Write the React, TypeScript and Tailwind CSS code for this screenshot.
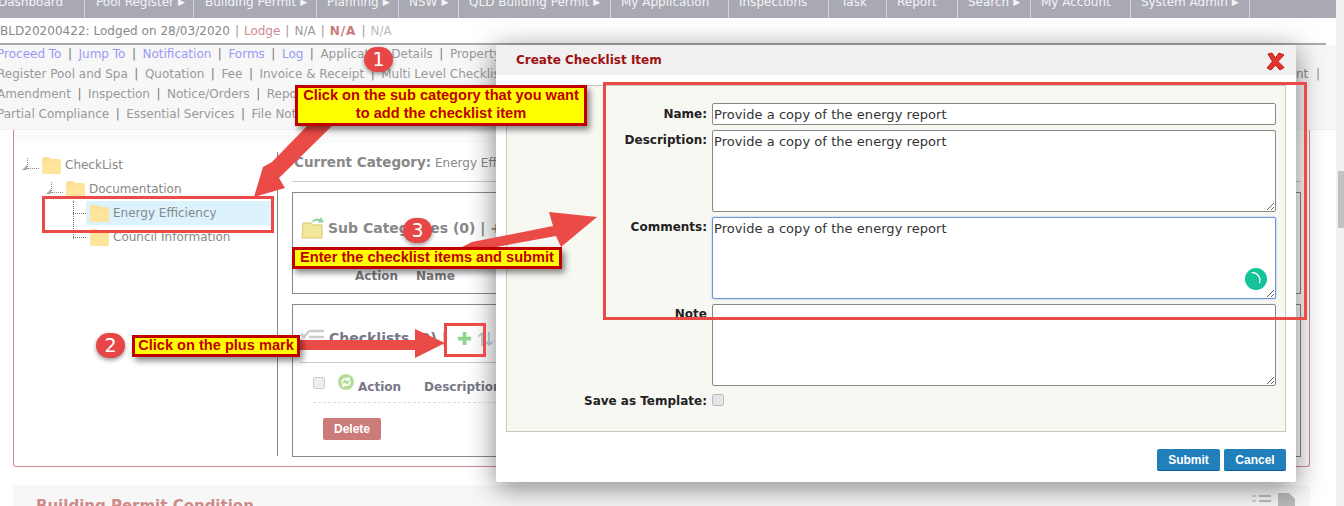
const navItems = [
  { label: "Dashboard", width: "w-[87px]", pad: "pl-0", arrow: false },
  { label: "Pool Register", width: "w-[109px]", pad: "pl-[11px]", arrow: true },
  { label: "Building Permit", width: "w-[123px]", pad: "pl-[11px]", arrow: true },
  { label: "Planning", width: "w-[82px]", pad: "pl-[10px]", arrow: true },
  { label: "NSW", width: "w-[60px]", pad: "pl-[10px]", arrow: true },
  { label: "QLD Building Permit", width: "w-[152px]", pad: "pl-[10px]", arrow: true },
  { label: "My Application", width: "w-[118px]", pad: "pl-[10px]", arrow: false },
  { label: "Inspections", width: "w-[100px]", pad: "pl-[10px]", arrow: false },
  { label: "Task", width: "w-[58px]", pad: "pl-[12px]", arrow: false },
  { label: "Report", width: "w-[71px]", pad: "pl-[10px]", arrow: false },
  { label: "Search", width: "w-[73px]", pad: "pl-[10px]", arrow: true },
  { label: "My Account", width: "w-[100px]", pad: "pl-[10px]", arrow: false },
  { label: "System Admin", width: "w-[119px]", pad: "pl-[10px]", arrow: true },
];

const linkRows = [
  ["Proceed To", "Jump To", "Notification", "Forms", "Log", "Application Details", "Property"],
  ["Register Pool and Spa", "Quotation", "Fee", "Invoice & Receipt", "Multi Level Checklist"],
  ["Amendment", "Inspection", "Notice/Orders", "Reports"],
  ["Partial Compliance", "Essential Services", "File Notes"],
];

const blueLinks = ["Proceed To", "Jump To", "Notification", "Forms", "Log"];

const Folder = ({ open = false }: { open?: boolean }) => (
  <svg width="21" height="18" viewBox="0 0 21 18" className="shrink-0">
    <path d="M1 3q0-2 2-2h5l2 2h8q2 0 2 2v11q0 2-2 2H3q-2 0-2-2z" fill="#ffdf9a" />
    <path d={open ? "M1 7h19v9q0 2-2 2H3q-2 0-2-2z" : "M1 6h19v10q0 2-2 2H3q-2 0-2-2z"} fill="#ffe49c" />
  </svg>
);

const Elbow = () => (
  <svg width="18" height="14" viewBox="0 0 18 14" className="shrink-0">
    <path d="M5.500 0v11M6 10.500h12" stroke="#888" strokeDasharray="1 1" fill="none" />
    <path d="M0 12l5-5v5z" fill="#aaa" />
  </svg>
);

const TreeBranch = ({ label, active = false }: { label: string; active?: boolean }) => (
  <div className="flex h-[24px] items-center pl-[59px]">
    <div className="h-px w-[13px] border-t border-dotted border-[#777]" />
    <div className={`flex h-[24px] w-[185px] items-center gap-[3px] pl-[3px] ${active ? "bg-[#dcf2fc]" : ""}`}>
      <Folder />
      <span className="text-[#888]">{label}</span>
    </div>
  </div>
);

const Tree = () => (
  <div className="relative -mt-px h-[304px] w-[264px] shrink-0 border-r border-[#888] pt-px">
    <div className="flex h-[24px] items-center gap-[1px] pl-[8px]">
      <Elbow />
      <Folder open />
      <span className="ml-[2px] text-[#888]">CheckList</span>
    </div>
    <div className="flex h-[24px] items-center gap-[1px] pl-[32px]">
      <Elbow />
      <Folder open />
      <span className="ml-[2px] text-[#888]">Documentation</span>
    </div>
    <TreeBranch label="Energy Efficiency" active />
    <TreeBranch label="Council Information" />
    <div className="absolute left-[59px] top-[49px] h-[38px] border-l border-dotted border-[#777]" />
  </div>
);

const CategoryPane = () => (
  <div className="w-[1009px]">
    <div className="h-[29px] border-b border-[#ccc] text-[#888]">
      <span className="ml-[2px] text-[13.500px] font-bold leading-[18px]">Current Category:</span>{" "}
      <span>Energy Efficiency</span>
    </div>
    <div className="mt-[10px] h-[102px] border border-[#888]">
      <div className="flex h-[68px] items-center pl-[8px] pt-[2px] text-[14px] font-bold text-[#888]">
        <svg width="24" height="22" viewBox="0 0 24 22" className="mr-[3px] shrink-0">
          <path d="M10 6q3-6 9-4l1-2 3 5-6 1 1-2q-4-1-8 2z" fill="#8fd39b" />
          <path d="M2 6h8l2 2h9v13H1z" fill="#f3e79a" stroke="#d8c76d" />
        </svg>
        Sub Categories (0) | +
      </div>
      <div className="mt-[6px] flex gap-[18px] pl-[62px] font-bold text-[#777]">
        <span>Action</span>
        <span>Name</span>
      </div>
    </div>
    <div className="mt-[10px] h-[153px] border border-[#888]">
      <div className="mx-[7px] flex h-[58px] items-center border-b border-[#ccc] pt-[10px] text-[14px] font-bold text-[#778]">
        <svg width="25" height="16" viewBox="0 0 25 16" className="mb-[4px] mr-[4px] shrink-0">
          <path d="M1 5l3 3 5-6M9 2h15M9 8h15M1 14h23" stroke="#ccc" strokeWidth="2.500" fill="none" />
        </svg>
        Checklists (0)
        <span className="ml-[5px] font-normal text-[#88a]">|</span>
        <svg width="15" height="15" viewBox="0 0 16 16" className="ml-[11px] shrink-0">
          <path d="M8 1v14M1 8h14" stroke="#8fd68f" strokeWidth="4" />
        </svg>
        <svg width="17" height="16" viewBox="0 0 17 16" className="ml-[5px] shrink-0">
          <path d="M5 15V2M1.500 5.500L5 2l3.500 3.500M12 1v13M8.500 10.500L12 14l3.500-3.500" stroke="#a8c8e0" strokeWidth="1.500" fill="none" />
        </svg>
      </div>
      <div className="mx-[20px] flex h-[40px] items-center border-b border-dashed border-[#ddd] font-bold text-[#778]">
        <input type="checkbox" className="h-[12px] w-[12px] appearance-none rounded-[2px] border border-[#ccc] bg-[#eee]" />
        <svg width="16" height="16" viewBox="0 0 16 16" className="mb-[1px] ml-[13px] shrink-0">
          <circle cx="8" cy="8" r="8" fill="#b6dc9c" />
          <path d="M4 9a4 4 0 0 1 7-3M12 7a4 4 0 0 1-7 3M11 3v3H8M5 13v-3h3" stroke="#fff" strokeWidth="1.500" fill="none" />
        </svg>
        <span className="ml-[4px] pt-[9px]">Action</span>
        <span className="ml-[23px] pt-[9px]">Description</span>
      </div>
      <button className="ml-[30px] mt-[15px] h-[22px] w-[58px] rounded-[2px] bg-[#cc7b7b] font-['Liberation_Sans',sans-serif] text-[12px] font-bold text-white">
        Delete
      </button>
    </div>
  </div>
);

const PageBody = () => (
  <div className="w-[1336px] shrink-0">
    <nav className="-ml-[2px] flex h-[18px] bg-[#a9a9b4] text-[#f4f4f4]">
      {navItems.map((item) => (
        <div key={item.label} className={`h-[18px] shrink-0 overflow-hidden border-r border-[#d5d5da] ${item.width} ${item.pad}`}>
          <div className="-mt-[6px] flex items-center gap-[4px] whitespace-nowrap leading-[16px]">
            {item.label}
            {item.arrow && <span className="text-[9px]">▶</span>}
          </div>
        </div>
      ))}
    </nav>
    <div className="mr-[10px] flex h-[27px] items-center border-b-2 border-[#aaa] pt-[1px] text-[#888]">
      <span className="tracking-[0.03px]">BLD20200422: Lodged on 28/03/2020</span>
      <span className="mx-[5px] text-[#999]">|</span>
      <span className="text-[#cf8a90]">Lodge</span>
      <span className="mx-[5px] text-[#999]">|</span>
      <span className="text-[#999]">N/A</span>
      <span className="mx-[5px] text-[#999]">|</span>
      <span className="font-bold tracking-[1px] text-[#c97a7a]">N/A</span>
      <span className="mx-[5px] text-[#999]">|</span>
      <span className="text-[#bbb]">N/A</span>
    </div>
    <div className="h-[85px] overflow-hidden border-b border-[#eee] bg-[#f7f7f7]">
      {linkRows.map((row) => (
        <div key={row[0]} className="-ml-[3px] -mt-px mb-px flex h-[20px] items-center whitespace-nowrap text-[#999]">
          {row.map((link, i) => (
            <span key={link} className="flex items-center">
              {i > 0 && <span className="mx-[6.500px] text-[#777]">|</span>}
              <span className={blueLinks.includes(link) ? "text-[#9a9af5]" : "text-[#999]"}>{link}</span>
            </span>
          ))}
          {row[0] === "Register Pool and Spa" && (
            <span className="ml-auto mr-[16px] text-[#888]">Assessment&nbsp;&nbsp;|</span>
          )}
        </div>
      ))}
    </div>
    <div className="ml-[13px] h-[337px] w-[1297px] rounded-b-[3px] border-x border-b border-[#cf8a90]">
      <div className="h-[13px] bg-[#fafafa]" />
      <div className="mt-[10px] flex">
        <Tree />
        <div className="pl-[14px]">
          <CategoryPane />
        </div>
      </div>
    </div>
    <div className="ml-[13px] mt-[18px] flex h-[30px] w-[1297px] items-start justify-between rounded-t-[3px] bg-[#f7f7f7] pl-[23px] pr-[14px] pt-[10px]">
      <span className="text-[15px] font-bold text-[#cf8a8a]">Building Permit Condition</span>
      <svg width="44" height="14" viewBox="0 0 44 14" className="-mt-[2px] shrink-0">
        <path d="M0 3h4M0 8h4" stroke="#c5d6ea" strokeWidth="2" />
        <path d="M7 3h12M7 8h12" stroke="#bbb" strokeWidth="2" />
        <path d="M26 0h11l6 6v8H26z" fill="#bbb" />
      </svg>
    </div>
  </div>
);

const Modal = () => (
  <div className="absolute left-[496px] top-[45px] h-[437px] w-[800px] rounded-[2px] bg-white shadow-[0_5px_28px_rgba(0,0,0,0.5)]">
    <div className="flex h-[30px] items-center justify-between bg-[#f1f1f1] pl-[20px] pr-[11px]">
      <span className="-mt-px font-bold text-[#a01010]">Create Checklist Item</span>
      <svg width="19" height="19" viewBox="0 0 19 19" className="mt-[2px]">
        <path d="M2 2l4-1 3.500 5L13 1l5 2-6 6.500 6 6-4 2.500-4.500-5L5 18l-4-2 5.500-6.500z" fill="#e5342b" stroke="#b41d1d" />
      </svg>
    </div>
    <div className="ml-[10px] mt-[10px] h-[347px] w-[780px] border border-[#c8c8bd] bg-[#f8f8f3] pt-[17px]">
      <div className="grid grid-cols-[200px_564px] gap-x-[5px] gap-y-[5px] text-[#222]">
        <label className="pt-[3px] text-right font-bold leading-[16px]">Name:</label>
        <input
          readOnly
          value="Provide a copy of the energy report"
          className="h-[22px] w-[564px] rounded-[2px] border border-[#888] bg-white px-[1px] pt-px text-[13px] tracking-[0.05px] text-[#333]"
        />
        <label className="pt-[2px] text-right font-bold leading-[16px]">Description:</label>
        <textarea
          readOnly
          value="Provide a copy of the energy report"
          className="block h-[82px] w-[564px] rounded-[2px] border border-[#888] bg-white px-[1px] py-[1px] text-[13px] tracking-[0.05px] text-[#333]"
        />
        <label className="pt-[2px] text-right font-bold leading-[16px]">Comments:</label>
        <div className="relative h-[82px]">
          <textarea
            readOnly
            value="Provide a copy of the energy report"
            className="block h-[82px] w-[564px] rounded-[2px] border border-[#6b93d6] bg-white px-[1px] py-[1px] text-[13px] tracking-[0.05px] text-[#333] shadow-[0_0_2px_#8fb2ea]"
          />
          <svg width="22" height="22" viewBox="0 0 22 22" className="absolute left-[533px] top-[51px]">
            <circle cx="11" cy="11" r="11" fill="#15c39a" />
            <path d="M6.700 4.700A7.600 7.600 0 0 1 14.300 15.300" stroke="#fff" strokeWidth="1.300" fill="none" />
          </svg>
        </div>
        <label className="pt-[2px] text-right font-bold leading-[16px]">Note</label>
        <textarea className="block h-[82px] w-[564px] rounded-[2px] border border-[#888] bg-white" />
        <label className="pt-[2px] text-right font-bold leading-[16px]">Save as Template:</label>
        <div className="pt-[3px]">
          <input type="checkbox" className="block h-[12px] w-[12px] appearance-none rounded-[2px] border border-[#bbb] bg-[#e6e6e6]" />
        </div>
      </div>
    </div>
    <div className="mr-[10px] mt-[17px] flex justify-end gap-[4px] font-['Liberation_Sans',sans-serif] font-bold text-white">
      <button className="h-[22px] w-[63px] rounded-[2px] border-b border-[#0a5a9e] bg-[#2180bc] text-[12px]">Submit</button>
      <button className="h-[22px] w-[62px] rounded-[2px] border-b border-[#0a5a9e] bg-[#2180bc] text-[12px]">Cancel</button>
    </div>
  </div>
);

const Step = ({ n, className }: { n: number; className: string }) => (
  <div
    className={`absolute flex h-[25px] w-[29px] items-center justify-center rounded-full bg-[#e84646] text-[19px] text-white shadow-[0_2px_4px_rgba(0,0,0,0.4)] ${className}`}
  >
    {n}
  </div>
);

const Callout = ({ className, children }: { className: string; children: React.ReactNode }) => (
  <div
    className={`absolute border-[3px] border-[#c00000] bg-[#ffff00] text-center font-['Liberation_Sans',sans-serif] text-[14.600px] font-bold text-[#c00000] shadow-[3px_4px_6px_rgba(0,0,0,0.45)] ${className}`}
  >
    {children}
  </div>
);

const Annotations = () => (
  <>
    <svg width="1344" height="506" viewBox="0 0 1344 506" className="pointer-events-none absolute left-0 top-0">
      <g fill="#ea4b46">
        <path d="M333 125L308 125L272 162L263 167L254 197L285 188L279 178z" />
        <path d="M300 340H415V329L445 343L415 358V350H300z" />
        <path d="M462 247L472 242L553 226L549 212L597 217L561 247L556 236L480 250z" />
      </g>
    </svg>
    <div className="absolute left-[42px] top-[196px] h-[37px] w-[232px] border-[3px] border-[#ea4b46]" />
    <div className="absolute left-[444px] top-[323px] h-[34px] w-[42px] border-[3px] border-[#ea4b46]" />
    <div className="absolute left-[603px] top-[82px] h-[238px] w-[704px] border-[3px] border-[#ea4b46]" />
    <Step n={1} className="left-[364px] top-[47px]" />
    <Step n={2} className="left-[96px] top-[333px]" />
    <Step n={3} className="left-[403px] top-[218px]" />
    <Callout className="left-[295px] top-[85px] h-[41px] w-[292px] leading-[18px]">
      <div className="-mt-[2px]">
        Click on the sub category that you want
        <br />
        to add the checklist item
      </div>
    </Callout>
    <Callout className="left-[132px] top-[335px] h-[22px] w-[168px] whitespace-nowrap leading-[14px]">Click on the plus mark</Callout>
    <Callout className="left-[292px] top-[247px] h-[22px] w-[270px] whitespace-nowrap leading-[14px]">
      Enter the checklist items and submit
    </Callout>
  </>
);

const App = () => {
  return (
    <div className="relative flex h-[506px] w-[1344px] overflow-hidden bg-white font-['DejaVu_Sans',sans-serif] text-[12px]">
      <PageBody />
      <div className="h-full w-[8px] bg-[#f1f1f1] pl-[2px] pt-[171px]">
        <div className="h-[57px] w-[6px] bg-[#c1c1c1]" />
      </div>
      <Modal />
      <Annotations />
    </div>
  );
};

export default App;
